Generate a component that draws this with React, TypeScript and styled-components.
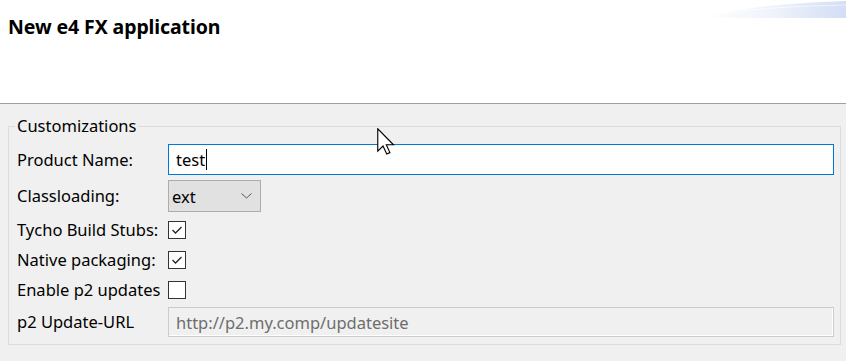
import * as React from 'react'
import styled, { createGlobalStyle } from 'styled-components'

const GlobalStyle = createGlobalStyle`
  html, body {
    margin: 0;
    padding: 0;
    background: #f0f0f0;
  }
  body {
    font-family: 'Noto Sans', 'Open Sans', sans-serif;
    color: #000;
  }
`

const Page = styled.div`
  width: 846px;
  height: 361px;
  overflow: hidden;
  position: relative;
`

const Header = styled.header`
  position: relative;
  height: 104px;
  background: #fff;
  border-bottom: 1px solid #a0a0a0;
  box-sizing: border-box;
  padding: 13px 8px 0;
`

const Title = styled.h1`
  margin: 0;
  font-size: 19.5px;
  line-height: 28px;
  font-weight: 700;
  letter-spacing: -0.1px;
`

const Swoosh = styled.svg`
  position: absolute;
  top: 0;
  right: 0;
`

const Main = styled.main`
  padding: 12px 5px 0 8px;
`

const Group = styled.fieldset`
  margin: 0;
  padding: 8px 6px 7px 8px;
  border: 1px solid #dcdcdc;
  min-width: 0;
`

const Legend = styled.legend`
  padding: 0 2px;
  margin-left: -2px;
  font-size: 16.5px;
  line-height: 20px;
`

const Form = styled.div`
  display: grid;
  grid-template-columns: 151px 1fr;
  grid-template-rows: 31px 32px 25px 25px 25px 30px;
  row-gap: 5px;
  align-items: center;
`

const Label = styled.div`
  font-size: 16.5px;
  line-height: 20px;
  white-space: nowrap;
`

const TextField = styled.div<{ $disabled?: boolean }>`
  height: 100%;
  box-sizing: border-box;
  display: flex;
  align-items: center;
  padding-left: 7px;
  font-size: 16.5px;
  background: ${p => (p.$disabled ? '#f0f0f0' : '#fff')};
  color: ${p => (p.$disabled ? '#6d6d6d' : '#000')};
  border: 1px solid ${p => (p.$disabled ? '#cccccc' : '#0078d7')};
  box-shadow: ${p => (p.$disabled ? 'inset -1px -1px 0 #fff' : 'none')};
`

const Caret = styled.span`
  display: inline-block;
  width: 1px;
  height: 21px;
  background: #000;
  margin-left: 1px;
`

const Combo = styled.div`
  width: 93px;
  height: 100%;
  box-sizing: border-box;
  display: flex;
  align-items: center;
  justify-content: space-between;
  padding: 0 8px 0 3px;
  background: #e1e1e1;
  border: 1px solid #adadad;
  font-size: 16.5px;
`

const Check = styled.div`
  width: 18px;
  height: 18px;
  box-sizing: border-box;
  border: 1px solid #333;
  background: #fff;
  display: flex;
  align-items: center;
  justify-content: center;
`

const Pointer = styled.svg`
  position: absolute;
  left: 377px;
  top: 128px;
`

const CheckBox = ({ checked }: { checked: boolean }) => (
  <Check>
    {checked && (
      <svg width="12" height="10" viewBox="0 0 12 10">
        <path d="M1.5 5 L4.5 8 L10.5 2" fill="none" stroke="#222" strokeWidth="1.3" />
      </svg>
    )}
  </Check>
)

export default function App() {
  return (
    <Page>
      <GlobalStyle />
      <Header>
        <Title>New e4 FX application</Title>
        <Swoosh width="140" height="20" viewBox="0 0 140 20">
          <defs>
            <linearGradient id="sw" x1="0" x2="1" y1="0" y2="0">
              <stop offset="0" stopColor="#ffffff" />
              <stop offset="0.5" stopColor="#eef2fb" />
              <stop offset="1" stopColor="#d3ddf4" />
            </linearGradient>
          </defs>
          <path d="M0 18 C 30 8, 80 3, 140 1 L140 18 Z" fill="url(#sw)" />
          <path d="M20 14 C 50 8, 90 6, 140 5" fill="none" stroke="#ffffff" strokeOpacity="0.6" />
        </Swoosh>
      </Header>
      <Main>
        <Group>
          <Legend>Customizations</Legend>
          <Form>
            <Label>Product Name:</Label>
            <TextField>
              test
              <Caret />
            </TextField>
            <Label>Classloading:</Label>
            <Combo>
              <span>ext</span>
              <svg width="11" height="6" viewBox="0 0 11 6">
                <path d="M0.5 0.5 L5.5 5 L10.5 0.5" fill="none" stroke="#555" strokeWidth="1" />
              </svg>
            </Combo>
            <Label>Tycho Build Stubs:</Label>
            <CheckBox checked />
            <Label>Native packaging:</Label>
            <CheckBox checked />
            <Label>Enable p2 updates</Label>
            <CheckBox checked={false} />
            <Label>p2 Update-URL</Label>
            <TextField $disabled>http://p2.my.comp/updatesite</TextField>
          </Form>
        </Group>
      </Main>
      <Pointer width="18" height="27" viewBox="0 0 12 18">
        <path
          d="M0.5 0.5 L0.5 15.5 L4 12 L6.5 17.3 L8.6 16.4 L6.2 11.2 L11 11.2 Z"
          fill="#fff"
          stroke="#000"
          strokeWidth="0.75"
          strokeLinejoin="miter"
        />
      </Pointer>
    </Page>
  )
}
